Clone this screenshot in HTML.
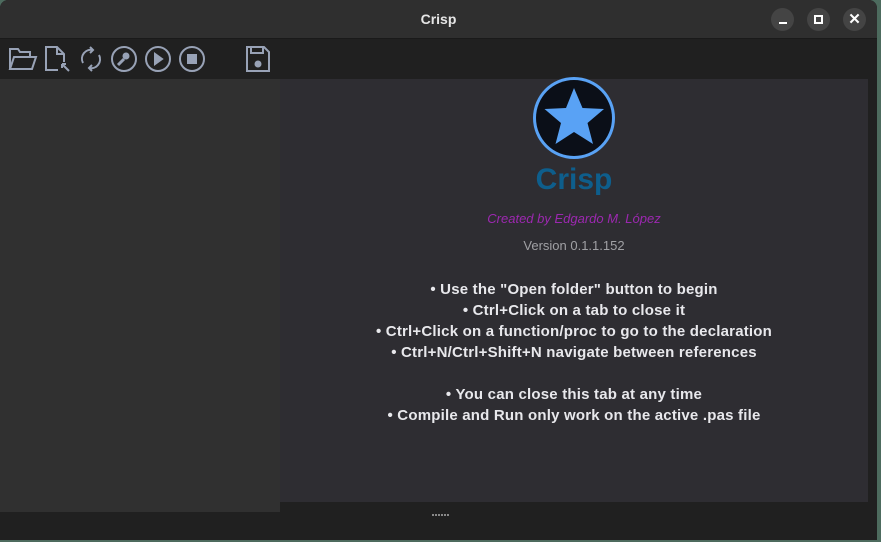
<!DOCTYPE html>
<html><head><style>
body{margin:0;width:881px;height:542px;background:#4d6b5e;overflow:hidden;font-family:"Liberation Sans",sans-serif;position:relative}
.win{position:absolute;left:0;top:0;width:877px;height:540px;background:#202020;border-radius:8px 8px 0 0;overflow:hidden}
.title{position:absolute;left:0;top:0;width:877px;height:38px;background:#2f2f2f;border-bottom:1px solid #1a1a1a}
.title .t{position:absolute;left:0;right:0;top:11px;text-align:center;color:#e6e6e6;font-weight:bold;font-size:14px}
.btn{position:absolute;top:8px;width:23px;height:23px;border-radius:50%;background:#444;color:#fff;text-align:center}
.left{position:absolute;left:0;top:79px;width:280px;height:433px;background:#303030}
.main{position:absolute;left:280px;top:79px;width:588px;height:423px;background:#2e2d32}
.lines{position:absolute;left:280px;width:588px;top:279px;text-align:center;color:#e8e8ec;font-weight:bold;font-size:15px;line-height:21px;letter-spacing:0.2px}
svg.i{position:absolute;top:45px}
</style></head><body>
<div class="win">
<div class="title"><div class="t">Crisp</div>
<div class="btn" style="left:771px"><div style="position:absolute;left:8px;top:14px;width:8px;height:2px;background:#fff"></div></div>
<div class="btn" style="left:807px"><div style="position:absolute;left:7px;top:7px;width:5px;height:5px;border:2px solid #fff"></div></div>
<div class="btn" style="left:843px;font-size:15px;line-height:23px;font-weight:bold">✕</div>
</div>
<svg class="i" style="left:8px" width="30" height="28" viewBox="0 0 30 28" fill="none" stroke="#98a2b6" stroke-width="2"><path d="M2 24V4h8l2 3h10v4"/><path d="M2 24l4-12h22l-4 12z"/></svg>
<svg class="i" style="left:44px" width="28" height="28" viewBox="0 0 28 28" fill="none" stroke="#98a2b6" stroke-width="2"><path d="M14 25H2V2h11l7 7v8"/><path d="M13 2v7h7"/><path d="M18 19l7 7M18 19h4M18 19v4"/></svg>
<svg class="i" style="left:78px" width="26" height="28" viewBox="0 0 26 28" fill="none" stroke="#98a2b6" stroke-width="2"><path d="M5 18a9 9 0 0 1 10-13M21 10a9 9 0 0 1-10 13"/><path d="M12 2l3 3-3 3M14 20l-3 3 3 3"/></svg>
<svg class="i" style="left:110px" width="28" height="28" viewBox="0 0 28 28" fill="none" stroke="#98a2b6" stroke-width="2"><circle cx="14" cy="14" r="12"/><path d="M8 20l6-6" stroke-width="3"/><circle cx="16" cy="11" r="3.5" fill="#98a2b6" stroke="none"/></svg>
<svg class="i" style="left:144px" width="28" height="28" viewBox="0 0 28 28" fill="none" stroke="#98a2b6" stroke-width="2"><circle cx="14" cy="14" r="12"/><path d="M11 9l7 5-7 5z" fill="#98a2b6"/></svg>
<svg class="i" style="left:178px" width="28" height="28" viewBox="0 0 28 28" fill="none" stroke="#98a2b6" stroke-width="2"><circle cx="14" cy="14" r="12"/><rect x="9" y="9" width="10" height="10" fill="#98a2b6" stroke="none"/></svg>
<svg class="i" style="left:245px" width="26" height="28" viewBox="0 0 26 28" fill="none" stroke="#98a2b6" stroke-width="2"><path d="M2 2h17l5 5v19H2z"/><path d="M6 2v6h12V2"/><circle cx="13" cy="19" r="2.5" fill="#98a2b6"/></svg>
<div class="left"></div>
<div class="main"></div>
<svg style="position:absolute;left:531px;top:77px" width="86" height="84" viewBox="0 0 86 84"><circle cx="43" cy="41" r="41" fill="#59a2f5"/><circle cx="43" cy="41" r="38" fill="#0b0f18"/><path d="M43 11l8.5 20 21.5 1-16.5 14 5.5 21L43 55 24.5 67 30 46 13.5 32l21.5-1z" fill="#59a2f5"/></svg>
<div style="position:absolute;left:280px;width:588px;top:163px;text-align:center;color:#0e5e8c;font-weight:bold;font-size:30px">Crisp</div>
<div style="position:absolute;left:280px;width:588px;top:211px;text-align:center;color:#9c28b0;font-style:italic;font-size:13px">Created by Edgardo M. López</div>
<div style="position:absolute;left:280px;width:588px;top:238px;text-align:center;color:#a0a0a4;font-size:13px">Version 0.1.1.152</div>
<div class="lines">• Use the "Open folder" button to begin<br>• Ctrl+Click on a tab to close it<br>• Ctrl+Click on a function/proc to go to the declaration<br>• Ctrl+N/Ctrl+Shift+N navigate between references<br><br>• You can close this tab at any time<br>• Compile and Run only work on the active .pas file</div>
<div style="position:absolute;left:432px;top:514px;width:18px;height:2px;background:repeating-linear-gradient(90deg,#888 0 2px,transparent 2px 3px)"></div>
</div>
</body></html>
